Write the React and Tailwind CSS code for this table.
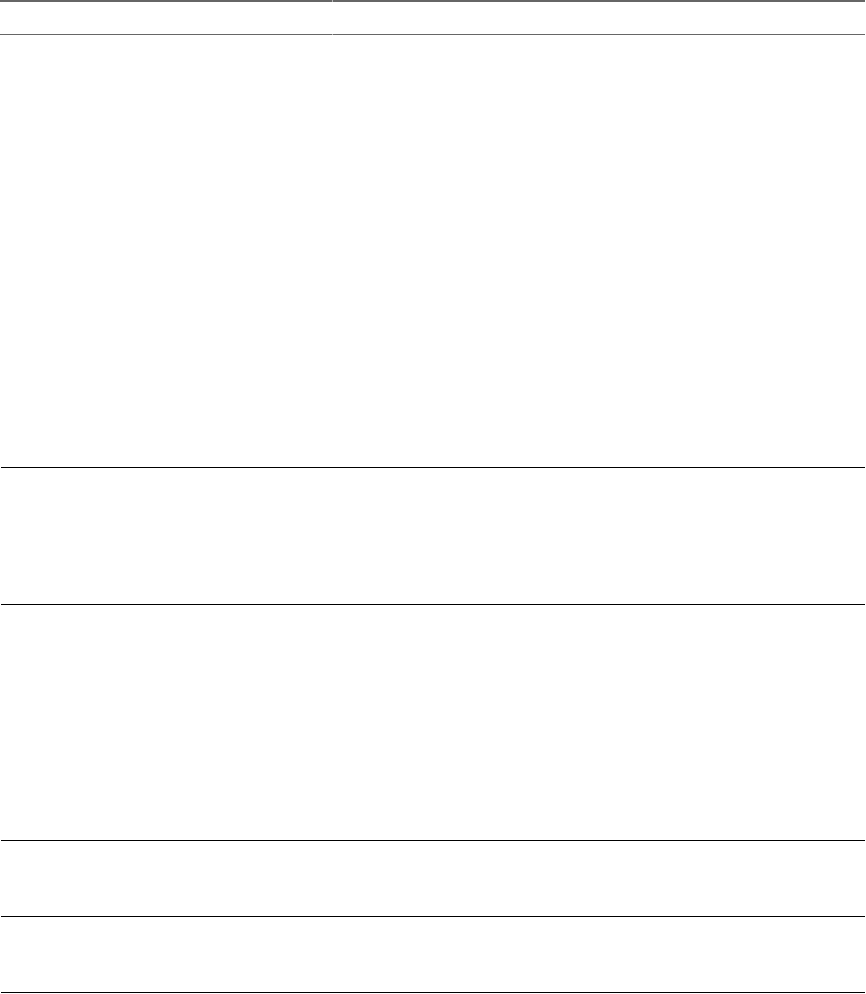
export default function App() {
  const rows = [
    { id: 1, h: 'h-[433px]' },
    { id: 2, h: 'h-[137px]' },
    { id: 3, h: 'h-[236px]' },
    { id: 4, h: 'h-[76px]' },
    { id: 5, h: 'h-[76px]' },
  ]

  return (
    <div className="w-[866px] h-[994px] bg-white font-['Liberation_Sans',sans-serif]">
      <div className="w-[865px]">
        {/* header row */}
        <div className="flex h-[35px]">
          <div className="w-[332px] border-t-2 border-b border-[#666666]" />
          <div className="w-px border-t-2 border-b border-[#b5b5b5]" />
          <div className="flex-1 border-t-2 border-b border-[#666666]" />
        </div>
        {rows.map((r) => (
          <div key={r.id} className={`flex ml-px border-b border-black ${r.h}`}>
            <div className="w-[331px]" />
            <div className="flex-1" />
          </div>
        ))}
      </div>
    </div>
  )
}
